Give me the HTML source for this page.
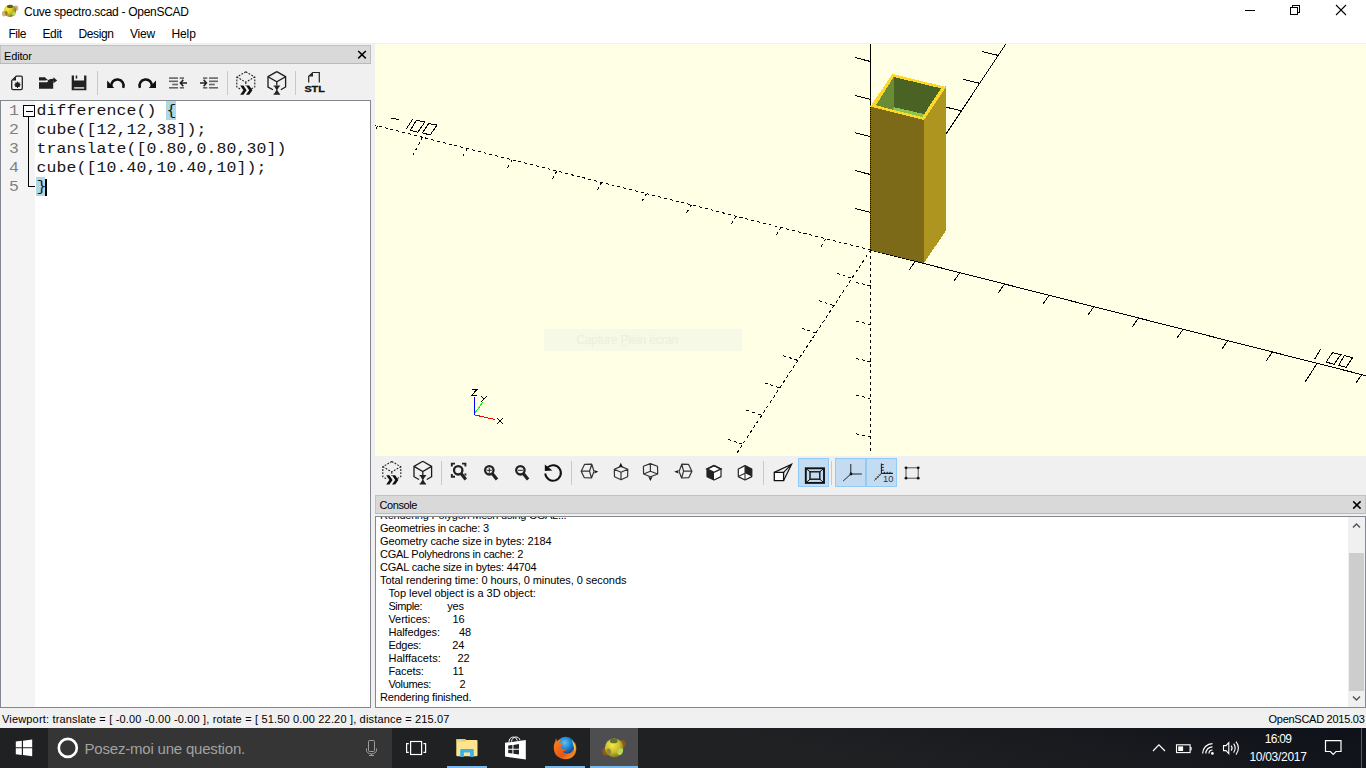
<!DOCTYPE html>
<html>
<head>
<meta charset="utf-8">
<title>Cuve spectro.scad - OpenSCAD</title>
<style>
html,body{margin:0;padding:0;}
body{width:1366px;height:768px;overflow:hidden;background:#f0f0f0;position:relative;font-family:"Liberation Sans",sans-serif;color:#000;}
.abs{position:absolute;}
.t{position:absolute;white-space:pre;line-height:1;}
#titlebar{left:0;top:0;width:1366px;height:43px;background:#fff;}
.ui{font-size:12px;}
.dlg{font-size:11px;}
#edtitle{left:0;top:45px;width:369px;height:17px;background:#d9d9d9;border:1px solid #c2c2c2;border-bottom-color:#b9b9b9;border-right-color:#bcbcbc;}
#editor{left:0;top:100px;width:369px;height:606px;background:#fff;border:1px solid #828790;}
#margin{left:1px;top:101px;width:34px;height:606px;background:#f4f4f4;}
#foldm{display:none;}
.ln{position:absolute;left:9px;font-family:"Liberation Mono",monospace;font-size:16.5px;color:#808080;line-height:19px;height:19px;transform:scaleY(0.85);transform-origin:0 13.9px;}
.code{position:absolute;left:36.5px;font-family:"Liberation Mono",monospace;font-size:16.5px;letter-spacing:0.1px;color:#161616;line-height:19px;height:19px;white-space:pre;transform:scaleY(0.85);transform-origin:0 13.9px;}
#viewport{left:375px;top:44px;width:991px;height:412px;background:#ffffe5;overflow:hidden;}
#contitle{left:375px;top:495px;width:989px;height:17px;background:#d9d9d9;border:1px solid #c2c2c2;border-bottom-color:#b9b9b9;}
#console{left:375px;top:516px;width:989px;height:190px;background:#fff;border:1px solid #828790;overflow:hidden;}
.cl{position:absolute;left:4px;font-size:11px;line-height:13px;height:13px;white-space:pre;letter-spacing:-0.1px;}
#taskbar{left:0;top:728px;width:1366px;height:40px;background:#202123;}
</style>
</head>
<body>
<div id="titlebar" class="abs"></div>
<div id="edtitle" class="abs"></div>
<div id="editor" class="abs"></div>
<div id="margin" class="abs"></div>
<div id="foldm" class="abs"></div>
<div id="viewport" class="abs"></div>
<div id="contitle" class="abs"></div>
<div id="console" class="abs">
<div class="cl" style="top:-8.5px;left:4px;letter-spacing:-0.24px;">Rendering Polygon Mesh using CGAL...</div>
<div class="cl" style="top:4.5px;left:4px;letter-spacing:-0.19px;">Geometries in cache: 3</div>
<div class="cl" style="top:17.5px;left:4px;letter-spacing:-0.1px;">Geometry cache size in bytes: 2184</div>
<div class="cl" style="top:30.5px;left:4px;letter-spacing:-0.25px;">CGAL Polyhedrons in cache: 2</div>
<div class="cl" style="top:43.5px;left:4px;letter-spacing:-0.19px;">CGAL cache size in bytes: 44704</div>
<div class="cl" style="top:56.5px;left:4px;letter-spacing:-0.06px;">Total rendering time: 0 hours, 0 minutes, 0 seconds</div>
<div class="cl" style="top:69.5px;left:12.4px;letter-spacing:-0.04px;">Top level object is a 3D object:</div>
<div class="cl" style="top:82.5px;left:12.4px;letter-spacing:-0.43px;">Simple:</div>
<div class="cl" style="top:82.5px;left:71.2px;">yes</div>
<div class="cl" style="top:95.5px;left:12.4px;letter-spacing:-0.04px;">Vertices:</div>
<div class="cl" style="top:95.5px;left:76.5px;">16</div>
<div class="cl" style="top:108.5px;left:12.4px;letter-spacing:-0.1px;">Halfedges:</div>
<div class="cl" style="top:108.5px;left:82.9px;">48</div>
<div class="cl" style="top:121.5px;left:12.4px;letter-spacing:-0.25px;">Edges:</div>
<div class="cl" style="top:121.5px;left:76.2px;">24</div>
<div class="cl" style="top:134.5px;left:12.4px;letter-spacing:0.06px;">Halffacets:</div>
<div class="cl" style="top:134.5px;left:81.5px;">22</div>
<div class="cl" style="top:147.5px;left:12.4px;letter-spacing:-0.1px;">Facets:</div>
<div class="cl" style="top:147.5px;left:76.5px;">11</div>
<div class="cl" style="top:160.5px;left:12.4px;letter-spacing:-0.32px;">Volumes:</div>
<div class="cl" style="top:160.5px;left:83.5px;">2</div>
<div class="cl" style="top:173.5px;left:4px;letter-spacing:-0.18px;">Rendering finished.</div>
<div class="abs" style="right:0;top:0;width:17px;height:190px;background:#f0f0f0;"></div>
<div class="abs" style="right:1px;top:36px;width:15px;height:138px;background:#cdcdcd;"></div>
<svg class="abs" style="right:0;top:0" width="17" height="190" viewBox="0 0 17 190"><path d="M5,10.5 L8.5,7 L12,10.5 M5,179.5 L8.5,183 L12,179.5" fill="none" stroke="#505050" stroke-width="1.4"/></svg>
</div>


<!-- editor content -->
<div class="abs" style="left:166px;top:101px;width:10px;height:19px;background:#add8e6;"></div>
<div class="abs" style="left:36px;top:177px;width:9px;height:19px;background:#add8e6;"></div>
<div class="ln" style="top:101px;">1</div>
<div class="code" style="top:101px;">difference() {</div>
<div class="ln" style="top:120px;">2</div>
<div class="code" style="top:120px;">cube([12,12,38]);</div>
<div class="ln" style="top:139px;">3</div>
<div class="code" style="top:139px;">translate([0.80,0.80,30])</div>
<div class="ln" style="top:158px;">4</div>
<div class="code" style="top:158px;">cube([10.40,10.40,10]);</div>
<div class="ln" style="top:177px;">5</div>
<div class="code" style="top:177px;">}</div>
<div class="abs" style="left:45px;top:179px;width:2px;height:17px;background:#000;"></div>
<svg class="abs" style="left:0;top:100px" width="40" height="100" viewBox="0 100 40 100" shape-rendering="crispEdges">
  <rect x="23.5" y="105.5" width="11" height="11" fill="#fff" stroke="#000"/>
  <line x1="26" y1="111.5" x2="33" y2="111.5" stroke="#000"/>
  <polyline points="28.5,117 28.5,186.5 35,186.5" fill="none" stroke="#000"/>
</svg>

<!-- editor toolbar -->
<svg class="abs" style="left:0;top:64px" width="372" height="36" viewBox="0 64 372 36">
  <!-- separators -->
  <g stroke="#c9c9c9" stroke-width="1" shape-rendering="crispEdges">
    <line x1="97.5" y1="71" x2="97.5" y2="95"/><line x1="227.5" y1="71" x2="227.5" y2="95"/><line x1="295.5" y1="71" x2="295.5" y2="95"/>
  </g>
  <!-- new -->
  <path d="M16.2,76.2 H21 Q22.3,76.2 22.3,77.5 V88.3 Q22.3,89.6 21,89.6 H13 Q11.7,89.6 11.7,88.3 V80.6 Z" fill="#f4f4f4" stroke="#222" stroke-width="1.3" stroke-linejoin="round"/>
  <path d="M12.4,80.4 H16 V76.8 Z" fill="#222"/>
  <circle cx="17.5" cy="84.8" r="2.5" fill="#222"/>
  <g stroke="#222" stroke-width="1"><line x1="14.3" y1="84.8" x2="20.7" y2="84.8"/><line x1="17.5" y1="81.6" x2="17.5" y2="88"/><line x1="15.3" y1="82.6" x2="19.7" y2="87"/><line x1="19.7" y1="82.6" x2="15.3" y2="87"/></g>
  <!-- open -->
  <path d="M39,77.2 H45 L46.5,79 H48 L46,80.6 H39 Z" fill="#222"/>
  <path d="M39,82.3 H47 L49.5,80.2 H53.2 V88.8 H39 Z" fill="#222"/>
  <path d="M47.2,80.8 Q49.5,78.5 53.5,78.8 V77.3 L57.2,80.4 L53.5,83.2 V81.2 Q50.5,81 49.2,82.3 Z" fill="#222"/>
  <!-- save -->
  <path d="M71.7,75.5 H74 V80.6 H84.1 V75.5 H86.4 V90.2 H71.7 Z" fill="#222"/>
  <rect x="75.7" y="75.5" width="1.5" height="3.1" fill="#222"/>
  <rect x="74.1" y="87" width="10.1" height="1.8" fill="#bdbdbd"/>
  <!-- undo -->
  <path d="M111.3,86.7 A6.2,6.2 0 1 1 123.2,87.9" fill="none" stroke="#111" stroke-width="2.6"/>
  <path d="M107.1,80.6 L107.1,87.9 L114.3,87.9 Z" fill="#111"/>
  
  <!-- redo -->
  <path d="M151.8,86.7 A6.2,6.2 0 1 0 139.9,87.9" fill="none" stroke="#111" stroke-width="2.6"/>
  <path d="M156,80.6 L156,87.9 L148.8,87.9 Z" fill="#111"/>
  
  <!-- unindent -->
  <g fill="#666">
    <rect x="169" y="77.3" width="9" height="1.6"/><rect x="179.7" y="77.3" width="4.3" height="1.6"/>
    <rect x="169" y="80.5" width="9" height="1.6"/>
    <rect x="172.2" y="83.7" width="5.8" height="1.6"/>
    <rect x="169" y="87" width="9" height="1.6"/><rect x="179.7" y="87" width="4.3" height="1.6"/>
  </g>
  <path d="M187,83 H181 M183.3,79.8 L180.4,83 L183.3,86.2" fill="none" stroke="#222" stroke-width="1.6"/>
  <!-- indent -->
  <g fill="#666">
    <rect x="203" y="77.3" width="4.3" height="1.6"/><rect x="209" y="77.3" width="9" height="1.6"/>
    <rect x="209" y="80.5" width="9" height="1.6"/>
    <rect x="209" y="83.7" width="5.8" height="1.6"/>
    <rect x="203" y="87" width="4.3" height="1.6"/><rect x="209" y="87" width="9" height="1.6"/>
  </g>
  <path d="M200,83 H206 M203.7,79.8 L206.4,83 L203.7,86.2" fill="none" stroke="#222" stroke-width="1.6"/>
  <!-- preview -->
  <g fill="none" stroke="#222" stroke-width="1.1" stroke-dasharray="1.8,1.4">
    <path d="M245.8,71.8 L254.8,77 V87 L250,89.5 M245.8,71.8 L236.8,77 V87 L241,89.5"/>
    <path d="M236.8,77 L245.8,82.2 L254.8,77 M245.8,82.2 V86"/>
  </g>
  <path d="M240.2,85.6 H243.4 L246.6,90.2 L243.4,94.8 H240.2 L243.4,90.2 Z M246,85.6 H249.2 L252.4,90.2 L249.2,94.8 H246 L249.2,90.2 Z" fill="#111"/>
  <!-- render -->
  <g fill="none" stroke="#1a1a1a" stroke-width="1.3">
    <path d="M276.8,71.6 L285.6,76.7 V87 L280.8,89.8 M276.8,71.6 L268,76.7 V87 L273,89.8"/>
    <path d="M268,76.7 L276.8,81.8 L285.6,76.7 M276.8,81.8 V85.5"/>
  </g>
  <path d="M273.6,85.4 H280.1 V86.6 H273.6 Z M273.6,93.6 H280.1 V94.8 H273.6 Z M274.4,86.6 H279.3 L277.3,90.1 L279.3,93.6 H274.4 L276.4,90.1 Z" fill="#222"/>
  <!-- STL -->
  <path d="M308.7,82.6 V76.3 L312.8,72.5 H319.3 V82.6" fill="none" stroke="#222" stroke-width="1.2"/>
  <path d="M309,76.5 H313 V72.7 Z" fill="#222"/>
  <text x="314.6" y="92.1" text-anchor="middle" font-family="Liberation Sans, sans-serif" font-weight="bold" font-size="9.3" fill="#111" textLength="20.4" lengthAdjust="spacingAndGlyphs" stroke="#111" stroke-width="0.3">STL</text>
</svg>

<!-- viewport -->
<svg class="abs" style="left:375px;top:44px" width="991" height="412" viewBox="375 44 991 412">
  <rect x="544" y="329" width="198" height="22" fill="#f5f9e6"/>
  <text x="576.4" y="344.3" font-family="Liberation Sans, sans-serif" font-size="12" fill="#eeeedb" textLength="101.9" lengthAdjust="spacing">Capture Plein écran</text>
  <line x1="621" y1="345.8" x2="628" y2="345.8" stroke="#eeeedb" stroke-width="1"/>
  <g stroke="#000" stroke-width="1" fill="none" shape-rendering="crispEdges">
    <line x1="870.5" y1="250.0" x2="1366.0" y2="375.7"/><line x1="946.0" y1="134.0" x2="1006.5" y2="43.0"/><line x1="870.5" y1="44.0" x2="870.5" y2="107.0"/><line x1="915.2" y1="261.3" x2="909.2" y2="269.9"/><line x1="959.8" y1="272.7" x2="953.8" y2="281.3"/><line x1="1004.5" y1="284.0" x2="998.5" y2="292.6"/><line x1="1049.1" y1="295.3" x2="1043.1" y2="303.9"/><line x1="1093.8" y1="306.7" x2="1087.8" y2="315.3"/><line x1="1138.5" y1="318.0" x2="1132.5" y2="326.6"/><line x1="1183.1" y1="329.3" x2="1177.1" y2="337.9"/><line x1="1227.8" y1="340.6" x2="1221.8" y2="349.2"/><line x1="1272.4" y1="352.0" x2="1266.4" y2="360.6"/><line x1="1317.1" y1="363.3" x2="1305.0" y2="382.2"/><line x1="1361.8" y1="374.6" x2="1355.8" y2="383.2"/><line x1="870.5" y1="212.3" x2="855.0" y2="208.4"/><line x1="870.5" y1="174.5" x2="855.0" y2="170.6"/><line x1="870.5" y1="136.6" x2="855.0" y2="132.7"/><line x1="870.5" y1="99.3" x2="855.0" y2="95.4"/><line x1="870.5" y1="61.5" x2="855.0" y2="57.6"/><line x1="998.1" y1="55.4" x2="982.1" y2="51.5"/><line x1="979.3" y1="83.2" x2="963.3" y2="79.3"/><line x1="961.8" y1="111.0" x2="945.8" y2="107.1"/>
    <g stroke-dasharray="3,3"><line x1="870.5" y1="250.0" x2="375.0" y2="125.3"/><line x1="870.5" y1="250.0" x2="735.0" y2="456.0"/><line x1="870.5" y1="250.0" x2="870.5" y2="454.0"/><line x1="825.7" y1="238.7" x2="820.3" y2="248.0"/><line x1="780.9" y1="227.4" x2="775.5" y2="236.7"/><line x1="736.1" y1="216.2" x2="730.7" y2="225.5"/><line x1="691.3" y1="204.9" x2="685.9" y2="214.2"/><line x1="646.5" y1="193.6" x2="641.1" y2="202.9"/><line x1="601.7" y1="182.3" x2="596.3" y2="191.6"/><line x1="556.9" y1="171.1" x2="551.5" y2="180.4"/><line x1="512.1" y1="159.8" x2="506.7" y2="169.1"/><line x1="467.3" y1="148.5" x2="461.9" y2="157.8"/><line x1="422.5" y1="137.2" x2="413.2" y2="154.8"/><line x1="377.7" y1="126.0" x2="372.3" y2="135.3"/><line x1="870.5" y1="285.8" x2="854.7" y2="282.2"/><line x1="870.5" y1="324.5" x2="854.7" y2="320.9"/><line x1="870.5" y1="361.8" x2="854.7" y2="358.2"/><line x1="870.5" y1="398.5" x2="854.7" y2="394.9"/><line x1="870.5" y1="437.1" x2="854.7" y2="433.5"/><line x1="851.3" y1="278.1" x2="836.8" y2="273.3"/><line x1="833.2" y1="305.3" x2="818.7" y2="300.5"/><line x1="816.0" y1="333.1" x2="801.5" y2="328.3"/><line x1="797.4" y1="360.3" x2="782.9" y2="355.5"/><line x1="778.8" y1="387.6" x2="764.3" y2="382.8"/><line x1="760.7" y1="414.8" x2="746.2" y2="410.0"/><line x1="742.4" y1="444.0" x2="727.9" y2="439.2"/></g>
    <polyline points="1320.6,349.3 1314.5,359.3"/><polygon points="1332.5,352.7 1340.7,354.8 1334,364.4 1326.2,362"/><polygon points="1344.2,355.6 1352.6,357.7 1346.2,367.3 1338.7,365.3"/><polyline points="390.9,118.5 399.1,119.4"/><polyline points="412.6,119.3 406.4,128.7"/><polygon points="416.5,120.2 424.9,122 417.8,132.3 410.3,130.1"/><polygon points="428.8,123.5 437,125.1 430.1,135.1 422.4,132.8"/>
  </g>
  <!-- cube -->
  <g shape-rendering="crispEdges">
    <polygon points="870,105 924,118.5 924,263 870,250" fill="#7d6a18"/>
    <polygon points="923.5,119 945,86 946,87 946,230.5 924,263 923.5,263" fill="#ad9520"/>
    <polygon points="870.3,106.5 892.5,74 946,87 924,120" fill="#fcd828"/>
    <polygon points="893.7,77 941,88.3 924.2,114.1 893.7,107.1" fill="#4a6325"/>
    <polygon points="875.9,105.3 893.7,77 893.7,107.1 892.7,109.6" fill="#6a8c35"/>
    <polygon points="893.7,107.1 924.2,114.1 922.2,117.1 892.7,109.6" fill="#8dc44e"/>
  </g>
  <line x1="870.5" y1="107" x2="870.5" y2="250" stroke="#000" stroke-width="1" stroke-dasharray="1,1" shape-rendering="crispEdges"/>
  <!-- gizmo -->
  <g stroke-width="1" fill="none" shape-rendering="crispEdges">
    <line x1="474.5" y1="415" x2="474.5" y2="397" stroke="#0000ff"/>
    <line x1="474.8" y1="413" x2="483" y2="402" stroke="#00ff00"/>
    <line x1="475" y1="415" x2="495" y2="419.5" stroke="#ff0000"/>
    <g stroke="#000">
      <polyline points="471.5,389.5 477,389.5 471.5,395.5 477,395.5"/>
      <polyline points="481,396 484,399"/><polyline points="487,396 481,402"/>
      <polyline points="497,418 503.5,424.5"/><polyline points="503,418 496.5,424.5"/>
    </g>
  </g>
</svg>

<!-- viewport toolbar -->
<svg class="abs" style="left:375px;top:456px" width="991" height="40" viewBox="375 456 991 40">
  <g shape-rendering="crispEdges">
    <rect x="798.5" y="458.5" width="30" height="28" fill="#c3dcf2" stroke="#92c9f5"/>
    <rect x="835.5" y="458.5" width="30" height="28" fill="#c3dcf2" stroke="#92c9f5"/>
    <rect x="866.5" y="458.5" width="30" height="28" fill="#c3dcf2" stroke="#92c9f5"/>
    <g stroke="#c9c9c9" stroke-width="1">
      <line x1="441.5" y1="461" x2="441.5" y2="485"/><line x1="571.5" y1="461" x2="571.5" y2="485"/><line x1="763.5" y1="461" x2="763.5" y2="485"/><line x1="831.5" y1="461" x2="831.5" y2="485"/>
    </g>
  </g>
  <!-- preview -->
  <g transform="translate(146,389.7)">
    <g fill="none" stroke="#222" stroke-width="1.1" stroke-dasharray="1.8,1.4">
      <path d="M245.8,71.8 L254.8,77 V87 L250,89.5 M245.8,71.8 L236.8,77 V87 L241,89.5"/>
      <path d="M236.8,77 L245.8,82.2 L254.8,77 M245.8,82.2 V86"/>
    </g>
    <path d="M240.2,85.6 H243.4 L246.6,90.2 L243.4,94.8 H240.2 L243.4,90.2 Z M246,85.6 H249.2 L252.4,90.2 L249.2,94.8 H246 L249.2,90.2 Z" fill="#111"/>
    <g fill="none" stroke="#1a1a1a" stroke-width="1.3">
      <path d="M276.8,71.6 L285.6,76.7 V87 L280.8,89.8 M276.8,71.6 L268,76.7 V87 L273,89.8"/>
      <path d="M268,76.7 L276.8,81.8 L285.6,76.7 M276.8,81.8 V85.5"/>
    </g>
    <path d="M273.6,85.4 H280.1 V86.6 H273.6 Z M273.6,93.6 H280.1 V94.8 H273.6 Z M274.4,86.6 H279.3 L277.3,90.1 L279.3,93.6 H274.4 L276.4,90.1 Z" fill="#222"/>
  </g>
  <!-- zoom all -->
  <g fill="none" stroke="#222">
    <path d="M451.8,466.4 V463.6 H455 M462,463.6 H465.4 V466.4 M451.8,474 V476.8 H455 M465.4,473.6 V475.6" stroke-width="1.9"/>
    <circle cx="458.2" cy="470.3" r="4.2" stroke-width="2.3"/>
    <line x1="461.3" y1="473.8" x2="465.8" y2="479.4" stroke-width="3.2"/>
  </g>
  <!-- zoom in -->
  <g fill="none" stroke="#222">
    <circle cx="489.3" cy="470.3" r="4.2" stroke-width="2.3"/>
    <line x1="492.4" y1="473.8" x2="497" y2="479.4" stroke-width="3.2"/>
    <path d="M486.8,470.3 H491.8 M489.3,467.8 V472.8" stroke-width="1"/>
  </g>
  <!-- zoom out -->
  <g fill="none" stroke="#222">
    <circle cx="520.4" cy="470.3" r="4.2" stroke-width="2.3"/>
    <line x1="523.5" y1="473.8" x2="528.1" y2="479.4" stroke-width="3.2"/>
    <path d="M517.9,470.3 H522.9" stroke-width="1"/>
  </g>
  <!-- reset view -->
  <path d="M547.6,467.4 A7.8,7.8 0 1 1 545.3,473.5" fill="none" stroke="#111" stroke-width="2"/>
  <path d="M544.8,464.4 L544.8,471 L552.4,470.6 Z" fill="#111"/>

  <g fill="none" stroke="#333" stroke-width="1.2" stroke-linejoin="round">
    <path d="M581.2,471.2 L584.5,464.4 L591.8,464.2 L594,471.4 L591.5,478 L584.2,477.6 Z M581.2,471.2 H589.5 L591.8,464.2 M589.5,471.2 L591.5,478"/>
    <path d="M685.2,464.2 L692,464.4 L695.3,471.2 L692.3,477.6 L685,478 L682.5,471.4 Z M695.3,471.2 H687 L685.2,464.2 M687,471.2 L685,478" transform="translate(-3.4,0)"/>
    <path d="M614.3,469.3 L621,466.4 L627.8,469.3 L627.6,476.8 L621,479.8 L614.5,476.8 Z M614.3,469.3 L621,472.2 L627.8,469.3 M621,472.2 V479.8"/>
    <path d="M643.4,466.3 L650.3,463.6 L657.5,466.3 L657.7,474 L650.5,476.8 L643.6,474 Z M643.6,474 L650.4,471.2 L657.7,474 M650.4,471.2 V463.6"/>
  </g>
  <path d="M594,469.9 L598.4,471.7 L594,473.5 L595,471.7 Z" fill="#111"/>
  <path d="M678.8,469.9 L674.2,471.7 L678.8,473.5 L677.8,471.7 Z" fill="#111"/>
  <path d="M618.6,467.4 L620.8,462.8 L623,467.4 L620.8,466.2 Z" fill="#111"/>
  <path d="M648.2,476.6 L650.4,481 L652.6,476.6 L650.4,477.8 Z" fill="#111"/>
  <!-- front -->
  <path d="M707,469 L714,465.6 L721,469 V476.6 L714,480 L707,476.6 Z" fill="#fff" stroke="#222" stroke-width="1.2" stroke-linejoin="round"/>
  <path d="M707,469 L714,472.3 V480 L707,476.6 Z" fill="#222"/>
  <path d="M707,469 L714,465.6 L721,469 L714,472.3 Z" fill="none" stroke="#222" stroke-width="1.4"/>
  <!-- back -->
  <path d="M738.3,469 L745,465.6 L751.8,469 V476.6 L745,480 L738.3,476.6 Z" fill="#fff" stroke="#222" stroke-width="1.2" stroke-linejoin="round"/>
  <path d="M745,465.6 L751.8,469 V476.6 L745,473.2 Z" fill="#222"/>
  <path d="M745,465.6 V480 M745,473.2 L738.3,476.6" fill="none" stroke="#333" stroke-width="1.1"/>
  <!-- perspective -->
  <path d="M774.3,472.4 H783.6 V480.6 H774.3 Z" fill="#fff" stroke="#111" stroke-width="1.3"/>
  <path d="M774.3,472.4 L791.6,464.2 L783.6,480.6 M783.6,472.4 L791.6,464.2" fill="none" stroke="#111" stroke-width="1.2"/>
  <!-- ortho -->
  <rect x="805.8" y="468.3" width="18.2" height="14.6" fill="none" stroke="#111" stroke-width="1.9"/>
  <rect x="810" y="471.8" width="9.8" height="7.4" fill="none" stroke="#111" stroke-width="1.4"/>
  <path d="M805.8,468.3 L810,471.8 M824,468.3 L819.8,471.8 M805.8,482.9 L810,479.2 M824,482.9 L819.8,479.2" stroke="#111" stroke-width="1"/>
  <!-- axes -->
  <path d="M850.8,464 V474 H861.8 M850.8,474 L843.2,481" fill="none" stroke="#222" stroke-width="1"/>
  <circle cx="851" cy="474" r="1.4" fill="#111"/>
  <!-- scale markers -->
  <path d="M881.4,463.6 V473.4 H893" fill="none" stroke="#222" stroke-width="1.1"/>
  <path d="M881.4,464.6 H883.8 M881.4,467.4 H883.8 M881.4,470.2 H883.8 M884.4,473.4 V471.8 M887.2,473.4 V471.8 M890,473.4 V471.8" stroke="#222" stroke-width="1"/>
  <path d="M881.4,473.6 L874.2,480.6" stroke="#444" stroke-width="1"/>
  <path d="M878.6,474.2 L880.2,475.8 M876.8,476 L878.4,477.6 M875,477.8 L876.6,479.4" stroke="#444" stroke-width="0.9"/>
  <text x="883" y="481.9" font-family="Liberation Sans, sans-serif" font-size="8.6" fill="#333" textLength="10.4" lengthAdjust="spacingAndGlyphs">10</text>
  <!-- crosshairs -->
  <rect x="906" y="467.8" width="12.2" height="10.4" fill="none" stroke="#555" stroke-width="1"/>
  <g fill="#111"><circle cx="906" cy="467.8" r="1.4"/><circle cx="918.2" cy="467.8" r="1.4"/><circle cx="906" cy="478.2" r="1.4"/><circle cx="918.2" cy="478.2" r="1.4"/></g>
</svg>

<svg class="abs" style="left:0;top:44px" width="1366" height="472" viewBox="0 44 1366 472">
  <g stroke="#000" stroke-width="1.5" fill="none">
    <path d="M358.2,51 L365.8,58.4 M365.8,51 L358.2,58.4"/>
    <path d="M1353.2,501.4 L1360.6,508.6 M1360.6,501.4 L1353.2,508.6"/>
  </g>
</svg>

<svg class="abs" style="left:0;top:0" width="22" height="22" viewBox="0 0 22 22">
  <defs><radialGradient id="tig" cx="0.3" cy="0.35" r="0.75"><stop offset="0" stop-color="#fbea3e"/><stop offset="0.5" stop-color="#d9c22c"/><stop offset="1" stop-color="#6f6212"/></radialGradient></defs>
  <ellipse cx="15.8" cy="8.2" rx="2.4" ry="2.7" fill="#c49a72" opacity="0.85"/>
  <ellipse cx="4.2" cy="13.6" rx="2.3" ry="2.9" fill="#c9a07a" opacity="0.85"/>
  <circle cx="10" cy="10.9" r="6.1" fill="url(#tig)"/>
  <ellipse cx="10" cy="6.4" rx="3" ry="1.6" fill="#4f6320"/>
  <ellipse cx="13.8" cy="13.6" rx="1.8" ry="2.3" fill="#b3d858" transform="rotate(30 13.8 13.6)"/>
  <ellipse cx="6.2" cy="13" rx="1.5" ry="2" fill="#8f8a30" transform="rotate(-20 6.2 13)"/>
</svg>
<!-- title + menu -->
<div class="t ui" style="left:24px;top:4px;line-height:16px;letter-spacing:-0.29px;">Cuve spectro.scad - OpenSCAD</div>
<div class="t ui" style="left:8.4px;top:26px;line-height:16px;letter-spacing:-0.4px;">File</div>
<div class="t ui" style="left:42.4px;top:26px;line-height:16px;letter-spacing:-0.3px;">Edit</div>
<div class="t ui" style="left:78.4px;top:26px;line-height:16px;letter-spacing:-0.35px;">Design</div>
<div class="t ui" style="left:130px;top:26px;line-height:16px;letter-spacing:-0.25px;">View</div>
<div class="t ui" style="left:171.5px;top:26px;line-height:16px;letter-spacing:-0.12px;">Help</div>
<svg class="abs" style="left:0;top:0" width="1366" height="44" viewBox="0 0 1366 44">
  <g stroke="#000" stroke-width="1" fill="none" shape-rendering="crispEdges">
    <line x1="1245" y1="10.5" x2="1255" y2="10.5"/>
    <rect x="1290.5" y="7.5" width="7" height="7"/>
    <polyline points="1292.5,7.5 1292.5,5.5 1299.5,5.5 1299.5,12.5 1297.5,12.5"/>
  </g>
  <g stroke="#000" stroke-width="1.1" fill="none">
    <line x1="1336" y1="5" x2="1346" y2="15"/><line x1="1346" y1="5" x2="1336" y2="15"/>
  </g>
</svg>
<!-- dock titles -->
<div class="t dlg" style="left:4px;top:48.5px;line-height:14px;letter-spacing:-0.15px;">Editor</div>
<div class="t dlg" style="left:379.5px;top:498.2px;line-height:14px;letter-spacing:-0.4px;">Console</div>
<!-- status bar -->
<div class="t dlg" style="left:2px;top:711.5px;line-height:14px;letter-spacing:0.17px;">Viewport: translate = [ -0.00 -0.00 -0.00 ], rotate = [ 51.50 0.00 22.20 ], distance = 215.07</div>
<div class="t dlg" style="right:1.5px;top:711.5px;line-height:14px;letter-spacing:-0.27px;">OpenSCAD 2015.03</div>
<div id="taskbar" class="abs">
<div class="abs" style="left:638px;top:0;width:728px;height:40px;background:linear-gradient(195deg, rgba(12,15,24,0.9) 0%, rgba(20,22,28,0.5) 45%, rgba(32,33,35,0) 75%);"></div>
<div class="abs" style="left:48px;top:0;width:344px;height:40px;background:#353535;"></div>
<div class="abs" style="left:590px;top:0;width:48px;height:40px;background:#4e4e50;"></div>
<div class="abs" style="left:447px;top:38px;width:40px;height:2px;background:#76b9ed;"></div>
<div class="abs" style="left:545px;top:38px;width:40px;height:2px;background:#76b9ed;"></div>
<div class="abs" style="left:590px;top:38px;width:48px;height:2px;background:#76b9ed;"></div>
<div class="t" style="left:84.5px;top:12px;line-height:18px;font-size:15px;letter-spacing:-0.2px;color:#a2a2a2;">Posez-moi une question.</div>
<div class="t ui" style="left:1248px;width:60px;text-align:center;top:4px;line-height:14px;color:#fff;letter-spacing:-0.75px;">16:09</div>
<div class="t ui" style="left:1248px;width:60px;text-align:center;top:22px;line-height:14px;color:#fff;letter-spacing:-0.3px;">10/03/2017</div>
<svg class="abs" style="left:0;top:0" width="1366" height="40" viewBox="0 728 1366 40">
  <!-- start -->
  <path d="M15.8,741.6 L21.8,740.8 V747.2 H15.8 Z M23,740.7 L32.2,739.6 V747.2 H23 Z M15.8,748.3 H21.8 V754.9 L15.8,754.2 Z M23,748.3 H32.2 V756.2 L23,755.1 Z" fill="#fff"/>
  <!-- cortana -->
  <circle cx="67.8" cy="747.9" r="9" fill="none" stroke="#fff" stroke-width="2.6"/>
  <!-- mic -->
  <g fill="none" stroke="#9c9c9c" stroke-width="1">
    <rect x="368.5" y="740.5" width="6" height="11" rx="0.8"/>
    <path d="M366.5,748.5 V750.5 A5,3.4 0 0 0 376.5,750.5 V748.5 M371.5,754 V755.5 M369,755.5 H374"/>
  </g>
  <!-- task view -->
  <g fill="none" stroke="#fff" stroke-width="1.2">
    <rect x="410.6" y="741.5" width="11" height="13"/>
    <path d="M408.8,743.6 H406.6 V752.4 H408.8 M423.4,743.6 H425.6 V752.4 H423.4"/>
  </g>
  <!-- explorer -->
  <path d="M456.3,740 Q456.3,739 457.3,739 H465 L466,740 H476.5 Q477.5,740 477.5,741 V755.2 Q477.5,756.2 476.5,756.2 H457.3 Q456.3,756.2 456.3,755.2 Z" fill="#ffe48f"/>
  <path d="M456.3,740 Q456.3,739 457.3,739 H465 L466,740.4 L465,741.6 H456.3 Z" fill="#f7c83e"/>
  <rect x="457.8" y="739.8" width="4.6" height="0.9" fill="#bfe6f0"/>
  <path d="M460.2,750 Q460.2,749 461.2,749 H472.8 Q473.8,749 473.8,750 V756.9 H470.1 V752.4 H463.9 V756.9 H460.2 Z" fill="#3bb0e8"/>
  <!-- store -->
  <path d="M505,742.8 L525.8,739.9 V759.6 L505,756.6 Z" fill="#fff"/>
  <path d="M509,742 C509,736 516,735.5 517.3,740.6 M511.5,741.6 C512,735.6 519.2,735.8 520,740.2" fill="none" stroke="#fff" stroke-width="1"/>
  <path d="M508.2,745.6 L512.4,745 V748.8 H508.2 Z M513.4,744.9 L519,744.1 V748.8 H513.4 Z M508.2,749.8 H512.4 V753.6 L508.2,753 Z M513.4,749.8 H519 V754.5 L513.4,753.7 Z" fill="#222325"/>
  <!-- firefox -->
  <defs>
    <radialGradient id="ffg" cx="0.45" cy="0.3" r="0.6"><stop offset="0" stop-color="#5ec3f2"/><stop offset="0.55" stop-color="#1a7fd0"/><stop offset="1" stop-color="#0b3f8f"/></radialGradient>
    <linearGradient id="fxo" x1="0" y1="0" x2="1" y2="1"><stop offset="0" stop-color="#f58a1f"/><stop offset="0.6" stop-color="#e8541a"/><stop offset="1" stop-color="#f9b21e"/></linearGradient>
    <radialGradient id="osg" cx="0.4" cy="0.35" r="0.7"><stop offset="0" stop-color="#f4e84a"/><stop offset="0.55" stop-color="#cdbb2c"/><stop offset="1" stop-color="#7d6f16"/></radialGradient>
  </defs>
  <circle cx="565.6" cy="746.8" r="10" fill="url(#ffg)"/>
  <path d="M555.5,741.2 C553,745 553,752 557,756 C561,760 569,760.5 573.5,756 C577,752.5 577.2,746 574.5,741.5 C575.5,746 574,750 571,752.5 C568,754.5 564,753.5 562.5,751.5 C565,751.5 566,750.5 567,749.5 C564,750 561,748.5 560.5,746.5 C561,745 562.5,744.5 563.8,744.3 C562,743 560.5,742.8 559.5,743.2 C559.8,741.5 560.8,740.3 562,739.6 C559.5,739.4 558,740.2 557,741.6 C556.5,740.4 556.3,739.5 556.4,738.6 C555.5,739.4 555.3,740.3 555.5,741.2 Z" fill="url(#fxo)"/>
  <path d="M572,740 C575,743 576.5,747 575,751.5 C574,748 573,744 572,740 Z" fill="#fbd84a" opacity="0.9"/>
  <!-- openscad -->
  <ellipse cx="622" cy="743.8" rx="3.6" ry="3.8" fill="#8a5a20"/>
  <ellipse cx="605.8" cy="751.6" rx="3.6" ry="4" fill="#8a5a20"/>
  <circle cx="614.2" cy="747.9" r="9.3" fill="url(#osg)"/>
  <ellipse cx="613.8" cy="741" rx="3.9" ry="2.3" fill="#5d7424"/>
  <ellipse cx="620.2" cy="751.6" rx="2.6" ry="3.6" fill="#b6d85a" transform="rotate(25 620.2 751.6)"/>
  <ellipse cx="608.8" cy="751.4" rx="2.2" ry="3" fill="#8f8a3a" transform="rotate(-15 608.8 751.4)"/>
  <!-- tray -->
  <g fill="none" stroke="#fff">
    <path d="M1153,751 L1158.9,744.8 L1165,751" stroke-width="1.2"/>
    <rect x="1176.5" y="744.8" width="13.6" height="7.8" stroke-width="1.1"/>
    <path d="M1212.5,743.6 A9.9,9.9 0 0 0 1202.6,753.5 M1212.5,746.8 A6.7,6.7 0 0 0 1205.8,753.5 M1212.5,750 A3.5,3.5 0 0 0 1209,753.5" stroke-width="1.2"/>
    <path d="M1223.5,745.6 H1226 L1228.8,742.6 V753.6 L1226,750.6 H1223.5 Z" stroke-width="1.1"/>
    <path d="M1231.2,745.6 Q1233,748.1 1231.2,750.6 M1233.6,743.6 Q1236.8,748.1 1233.6,752.6 M1236,741.6 Q1240.8,748.1 1236,754.6" stroke-width="1.1"/>
    <path d="M1325.5,740.7 H1341 V751.5 H1336 L1333.2,754.3 L1330.4,751.5 H1325.5 Z" stroke-width="1.2"/>
  </g>
  <rect x="1190.4" y="747" width="1.2" height="3.4" fill="#fff"/>
  <rect x="1178.2" y="746.4" width="4.9" height="4.6" fill="#fff"/>
  <circle cx="1212.4" cy="753.4" r="1.4" fill="#fff"/>
  <rect x="1361" y="728" width="1" height="40" fill="#5a5a5a"/>
</svg>
</div>
</body>
</html>
